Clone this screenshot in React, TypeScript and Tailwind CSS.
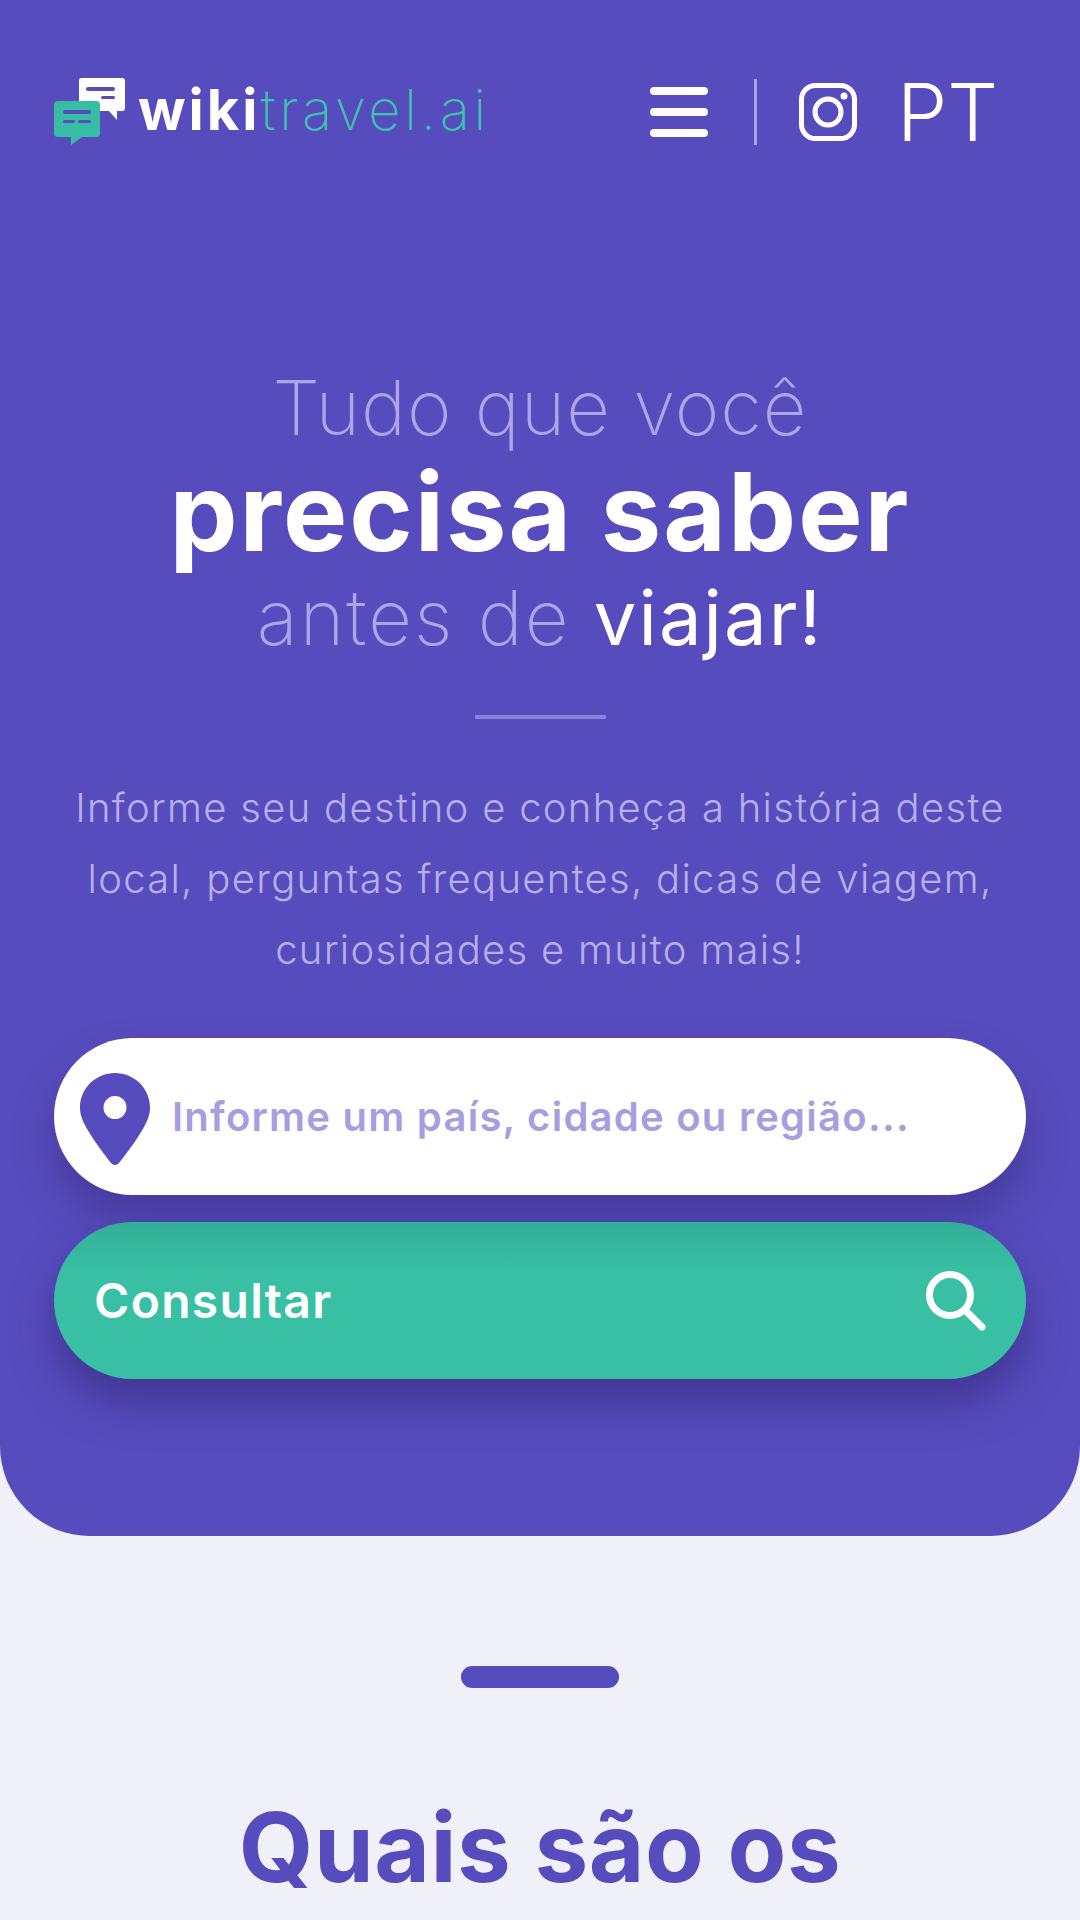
export default function App() {
  const font = { fontFamily: '"Inter", "Noto Sans", sans-serif' };
  return (
    <div style={font} className="h-[1920px] w-[1080px] overflow-hidden bg-[#f0f1f8]">
      <div className="h-[1536px] rounded-b-[90px] bg-[#574cbd] px-[54px] pt-[78px] flex flex-col">
        <div className="flex items-center justify-between h-[68px]">
          <div className="flex items-center">
            <svg width="72" height="68" viewBox="0 0 72 68">
              <path d="M25 2a2 2 0 0 1 2-2h41a3 3 0 0 1 3 3v27a3 3 0 0 1-3 3h-5v9l-8-9H25z" fill="#fff" />
              <rect x="32" y="9" width="29" height="4" rx="2" fill="#574cbd" />
              <rect x="47" y="18" width="14" height="3" rx="1.500" fill="#574cbd" />
              <path d="M0 27a4 4 0 0 1 4-4h38a4 4 0 0 1 4 4v28a4 4 0 0 1-4 4H28L17 67v-8H4a4 4 0 0 1-4-4z" fill="#37bda2" />
              <rect x="9" y="32" width="28" height="4" rx="2" fill="#574cbd" />
              <rect x="9" y="42" width="12" height="3" rx="1.500" fill="#574cbd" />
              <rect x="24" y="42" width="13" height="3" rx="1.500" fill="#574cbd" />
            </svg>
            <div className="ml-[12px] pb-[4px] text-[56px] leading-none">
              <span className="font-bold tracking-[3px] text-white">wiki</span>
              <span className="font-extralight tracking-[3.700px] text-[#3cc4ad]">travel.ai</span>
            </div>
          </div>
          <div className="flex items-center pr-[28px]">
            <div className="flex flex-col gap-[13px] w-[58px]">
              <div className="h-[8px] rounded-full bg-white" />
              <div className="h-[8px] rounded-full bg-white" />
              <div className="h-[8px] rounded-full bg-white" />
            </div>
            <div className="ml-[46px] h-[66px] w-[3px] bg-[#a9a3e4]" />
            <svg className="ml-[42px]" width="58" height="58" viewBox="0 0 58 58" fill="none" stroke="#fff" strokeWidth="5">
              <rect x="2.500" y="2.500" width="53" height="53" rx="14" />
              <circle cx="29" cy="29" r="13" />
              <circle cx="45" cy="13" r="3.500" fill="#fff" stroke="none" />
            </svg>
            <div className="ml-[40px] text-[80px] leading-none font-light text-white">PT</div>
          </div>
        </div>

        <div className="mt-[218px] text-center">
          <div className="text-[76px] leading-[86px] tracking-[1px] font-extralight text-[#aca6e6]">Tudo que você</div>
          <div className="mt-[2px] text-[108px] leading-[120px] tracking-[2px] font-bold text-white">precisa saber</div>
          <div className="mt-[1px] text-[76px] leading-[88px] tracking-[2px] font-extralight text-[#aca6e6]">
            antes de <span className="font-normal text-white">viajar!</span>
          </div>
        </div>
        <div className="mx-auto mt-[54px] h-[4px] w-[131px] bg-[#8b83d8]" />
        <div className="mt-[53px] text-center text-[40px] leading-[71px] tracking-[1.300px] font-light text-[#b5b0e9]">
          <div>Informe seu destino e conheça a história deste</div>
          <div>local, perguntas frequentes, dicas de viagem,</div>
          <div>curiosidades e muito mais!</div>
        </div>

        <div className="mt-[53px] flex h-[157px] items-center rounded-full bg-white pl-[26px] shadow-[0_24px_40px_rgba(50,40,120,0.45)]">
          <svg className="mt-[4px]" width="70" height="92" viewBox="0 0 70 92">
            <path fillRule="evenodd" d="M35 0C15.700 0 0 15.400 0 34.500c0 8 3 14 6.500 20.500C14 68 24 81 31 90c2 2.600 6 2.600 8 0 7-9 17-22 24.500-35C67 48.500 70 42.500 70 34.500 70 15.400 54.300 0 35 0zm0 23a11.500 11.500 0 1 1 0 23 11.500 11.500 0 0 1 0-23z" fill="#574cbd" />
          </svg>
          <div className="ml-[22px] text-[40px] tracking-[1.250px] font-semibold text-[#a69ede]">Informe um país, cidade ou região...</div>
        </div>
        <div className="mt-[27px] flex h-[157px] items-center justify-between rounded-full bg-gradient-to-b from-[#33ae97] to-[#38bfa4] to-[30%] pl-[40px] pr-[40px] shadow-[0_24px_40px_rgba(50,40,120,0.6)]">
          <div className="text-[48px] tracking-[1.300px] font-semibold text-white">Consultar</div>
          <svg width="60" height="60" viewBox="0 0 60 60" fill="none" stroke="#fff" strokeWidth="7" strokeLinecap="round">
            <circle cx="24" cy="24" r="20.500" />
            <path d="M40 40 L56 56" />
          </svg>
        </div>
      </div>
      <div className="mx-auto mt-[130px] h-[22px] w-[158px] rounded-full bg-[#574cbd]" />
      <div className="mt-[104px] text-center text-[96px] leading-[110px] tracking-[0.500px] font-bold text-[#574cbd]">Quais são os</div>
    </div>
  );
}
